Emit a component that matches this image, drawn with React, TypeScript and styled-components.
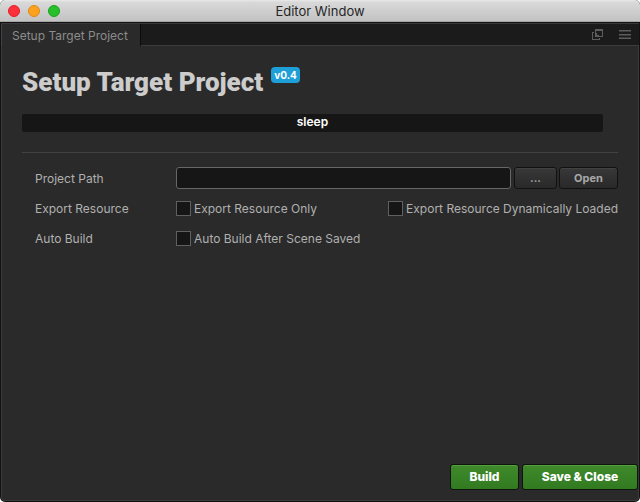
import React from "react";
import styled, { createGlobalStyle } from "styled-components";

const GlobalStyle = createGlobalStyle`
  *, *::before, *::after { box-sizing: border-box; }
  body {
    margin: 0;
    background: #fff;
    font-family: Inter, Roboto, "Liberation Sans", sans-serif;
    font-size: 12px;
    line-height: 16px;
    color: #b0b0b0;
  }
  button, input { font: inherit; }
`;

const Window = styled.div`
  display: flex;
  flex-direction: column;
  min-height: 100vh;
  overflow: hidden;
  border-radius: 5px;
  background: #111;
`;

const TitleBar = styled.header`
  display: grid;
  grid-template-columns: 1fr auto 1fr;
  align-items: center;
  height: 22px;
  padding: 0 8px;
  background: linear-gradient(#e9e9e9, #d9d9d9 10%, #c2c2c2);
  border-bottom: 1px solid #a5a5a5;
`;

const WindowTitle = styled.div`
  font-size: 13px;
  color: #262626;
`;

const Lights = styled.div`
  display: flex;
  gap: 8px;
`;

const Light = styled.button<{ $fill: string; $edge: string }>`
  width: 12px;
  height: 12px;
  padding: 0;
  border: 1px solid ${(p) => p.$edge};
  border-radius: 50%;
  background: ${(p) => p.$fill};
`;

const TabStrip = styled.nav`
  display: flex;
  align-items: stretch;
  height: 23px;
  margin: 1px 1px 0;
  background: #1b1b1b;
  border-top: 1px solid #383838;
`;

const Tab = styled.button`
  padding: 2px 12px 0 10px;
  border: 0;
  border-left: 1px solid #444;
  border-right: 1px solid #0c0c0c;
  background: #2a2a2a;
  color: #8c8c8c;
  white-space: nowrap;
`;

const StripTools = styled.div`
  display: flex;
  flex: 1;
  align-items: center;
  justify-content: flex-end;
  gap: 15px;
  padding-right: 8px;
  border-bottom: 1px solid #3c3c3c;
`;

const ToolButton = styled.button`
  display: flex;
  padding: 0;
  border: 0;
  background: none;
  color: #5c5c5c;
`;

const Panel = styled.main`
  display: flex;
  flex: 1;
  flex-direction: column;
  margin: 0 1px 1px;
  border: solid #3a3a3a;
  border-width: 0 1px 1px;
  border-radius: 0 0 4px 4px;
  background: #2a2a2a;
`;

const Body = styled.section`
  flex: 1;
  padding: 20px 20px 0;
`;

const Heading = styled.div`
  display: flex;
  align-items: flex-start;
  gap: 8px;
`;

const Title = styled.h1`
  margin: 0;
  font-family: Roboto, Inter, sans-serif;
  font-size: 26px;
  line-height: 32px;
  font-weight: 900;
  color: #ccc;
`;

const Version = styled.span`
  margin-top: 1px;
  padding: 0 3px;
  border-radius: 4px;
  background: #1f9fd8;
  color: #fff;
  font-size: 10px;
  font-weight: 700;
`;

const Status = styled.div`
  margin: 16px 15px 0 0;
  height: 18px;
  border-radius: 2px;
  background: #161616;
  color: #fff;
  font-weight: 600;
  text-align: center;
`;

const Divider = styled.hr`
  height: 1px;
  margin: 20px 0 14px;
  border: 0;
  background: #424242;
`;

const Row = styled.div`
  display: grid;
  grid-template-columns: 141px 1fr;
  align-items: center;
  height: 22px;
  margin-bottom: 8px;
  padding-left: 13px;
`;

const RowLabel = styled.label`
  padding-top: 2px;
`;

const Fields = styled.div`
  display: flex;
  align-items: center;
  justify-content: space-between;
  gap: 2px;
`;

const PathInput = styled.input`
  flex: 1;
  min-width: 0;
  height: 22px;
  margin-right: 1px;
  padding: 0 6px;
  border: 1px solid #666;
  border-radius: 3px;
  background: #161616;
  color: #ccc;
`;

const SmallButton = styled.button<{ $width: number }>`
  width: ${(p) => p.$width}px;
  height: 22px;
  padding: 0;
  border: 1px solid #111;
  border-radius: 3px;
  background: linear-gradient(#383838, #292929);
  box-shadow: inset 0 1px #424242;
  color: #a8a8a8;
  font-size: 11px;
  font-weight: 700;
`;

const CheckLabel = styled.label`
  display: flex;
  align-items: center;
  gap: 3px;
  white-space: nowrap;
`;

const CheckText = styled.span`
  padding-top: 2px;
`;

const CheckBox = styled.input`
  appearance: none;
  width: 15px;
  height: 15px;
  margin: 0;
  border: 1px solid #606060;
  background: #161616;
  &:checked { background: #1f9fd8; }
`;

const Footer = styled.footer`
  display: flex;
  justify-content: flex-end;
  gap: 3px;
  padding-bottom: 10px;
`;

const GreenButton = styled.button<{ $width: number }>`
  width: ${(p) => p.$width}px;
  height: 26px;
  padding: 0;
  border: 1px solid #0e150b;
  border-radius: 3px;
  background: linear-gradient(#3f8a2c, #327a20);
  box-shadow: inset 0 1px #55a03f;
  color: #fff;
  font-weight: 800;
`;

function Check({ text }: { text: string }) {
  return (
    <CheckLabel>
      <CheckBox type="checkbox" />
      <CheckText>{text}</CheckText>
    </CheckLabel>
  );
}

export default function App() {
  return (
    <>
      <GlobalStyle />
      <Window>
        <TitleBar>
          <Lights>
            <Light aria-label="Close" $fill="#fc3038" $edge="#e01f2c" />
            <Light aria-label="Minimize" $fill="#fda21f" $edge="#dd8a14" />
            <Light aria-label="Zoom" $fill="#27c02b" $edge="#1ba01f" />
          </Lights>
          <WindowTitle>Editor Window</WindowTitle>
        </TitleBar>
        <TabStrip>
          <Tab>Setup Target Project</Tab>
          <StripTools>
            <ToolButton aria-label="Pop out">
              <svg width="12" height="12" fill="currentColor">
                <path fillRule="evenodd" d="M3 0h8v8H3z M4 2v5h6V2z" />
                <path d="M0 3h2v1H1v6h6V9h1v2H0z M4 4h1v2h2v1H4z" />
              </svg>
            </ToolButton>
            <ToolButton aria-label="Menu">
              <svg width="12" height="12" fill="currentColor">
                <path d="M0 1h12v1H0z M0 5h12v1H0z M0 9h12v1H0z" />
                <path opacity=".5" d="M0 2h12v1H0z M0 6h12v1H0z M0 8h12v1H0z" />
              </svg>
            </ToolButton>
          </StripTools>
        </TabStrip>
        <Panel>
          <Body>
            <Heading>
              <Title>Setup Target Project</Title>
              <Version>v0.4</Version>
            </Heading>
            <Status role="status">sleep</Status>
            <Divider />
            <Row>
              <RowLabel htmlFor="project-path">Project Path</RowLabel>
              <Fields>
                <PathInput id="project-path" type="text" />
                <SmallButton $width={43}>...</SmallButton>
                <SmallButton $width={59}>Open</SmallButton>
              </Fields>
            </Row>
            <Row role="group" aria-labelledby="export-label">
              <RowLabel as="span" id="export-label">Export Resource</RowLabel>
              <Fields>
                <Check text="Export Resource Only" />
                <Check text="Export Resource Dynamically Loaded" />
              </Fields>
            </Row>
            <Row role="group" aria-labelledby="build-label">
              <RowLabel as="span" id="build-label">Auto Build</RowLabel>
              <Fields>
                <Check text="Auto Build After Scene Saved" />
              </Fields>
            </Row>
          </Body>
          <Footer>
            <GreenButton $width={69}>Build</GreenButton>
            <GreenButton $width={116}>Save &amp; Close</GreenButton>
          </Footer>
        </Panel>
      </Window>
    </>
  );
}
